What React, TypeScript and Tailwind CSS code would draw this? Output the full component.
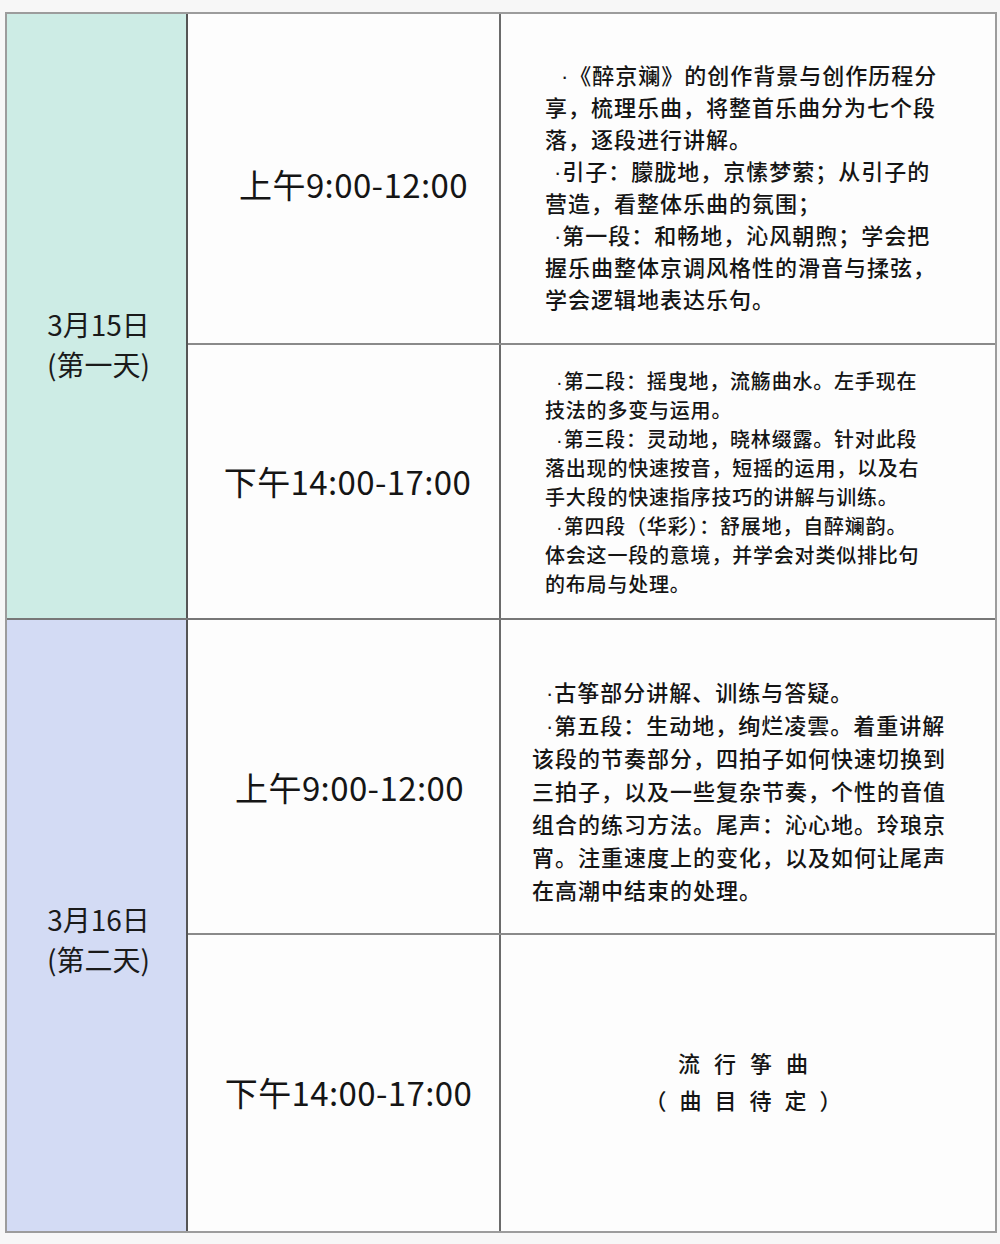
const font = { fontFamily: '"Noto Sans CJK SC", "Noto Sans", sans-serif' };

type Line = { t: string; indent?: number; dot?: boolean };

function Lines({ lines, size, lh, track }: { lines: Line[]; size: string; lh: number; track: string }) {
  return (
    <div className={`${size} ${track} text-[#151515] font-medium`}>
      {lines.map((l, i) => (
        <div
          key={i}
          style={{ paddingLeft: l.indent ?? 0, height: lh, lineHeight: `${lh}px` }}
          className="whitespace-nowrap overflow-visible"
        >
          {l.dot && <span className="inline-block leading-none font-['Liberation_Sans',sans-serif] tracking-[1px]">·</span>}
          {l.t}
        </div>
      ))}
    </div>
  );
}

const row1: Line[] = [
  { t: '《醉京斓》的创作背景与创作历程分', indent: 16, dot: true },
  { t: '享，梳理乐曲，将整首乐曲分为七个段' },
  { t: '落，逐段进行讲解。' },
  { t: '引子：朦胧地，京愫梦萦；从引子的', indent: 9, dot: true },
  { t: '营造，看整体乐曲的氛围；' },
  { t: '第一段：和畅地，沁风朝煦；学会把', indent: 9, dot: true },
  { t: '握乐曲整体京调风格性的滑音与揉弦，' },
  { t: '学会逻辑地表达乐句。' },
];

const row2: Line[] = [
  { t: '第二段：摇曳地，流觞曲水。左手现在', indent: 11, dot: true },
  { t: '技法的多变与运用。' },
  { t: '第三段：灵动地，晓林缀露。针对此段', indent: 11, dot: true },
  { t: '落出现的快速按音，短摇的运用，以及右' },
  { t: '手大段的快速指序技巧的讲解与训练。' },
  { t: '第四段（华彩）：舒展地，自醉斓韵。', indent: 11, dot: true },
  { t: '体会这一段的意境，并学会对类似排比句' },
  { t: '的布局与处理。' },
];

const row3: Line[] = [
  { t: '古筝部分讲解、训练与答疑。', indent: 14, dot: true },
  { t: '第五段：生动地，绚烂凌雲。着重讲解', indent: 14, dot: true },
  { t: '该段的节奏部分，四拍子如何快速切换到' },
  { t: '三拍子，以及一些复杂节奏，个性的音值' },
  { t: '组合的练习方法。尾声：沁心地。玲琅京' },
  { t: '宵。注重速度上的变化，以及如何让尾声' },
  { t: '在高潮中结束的处理。' },
];

function Time({ text, pt }: { text: string; pt: string }) {
  return (
    <div className={`w-[313px] shrink-0 border-r-2 border-[#6b6b6b] flex items-center justify-center ${pt}`}>
      <span className="text-[33px] text-[#151515] tracking-[0.4px]">{text}</span>
    </div>
  );
}

function DateCell({ d, sub, bg, pt }: { d: string; sub: string; bg: string; pt: string }) {
  return (
    <div className={`w-[181px] shrink-0 border-r-2 border-[#555] ${bg} flex flex-col items-center justify-center ${pt}`}>
      <div className="text-[28px] leading-[40px] text-[#1a1a1a] pl-[4px]">{d}</div>
      <div className="text-[28px] leading-[40px] text-[#1a1a1a] pl-[4px]">{sub}</div>
    </div>
  );
}

export default function App() {
  return (
    <div style={font} className="w-[1000px] h-[1244px] bg-[#f7f7f7] pt-[12px] pl-[5px]">
      <div className="w-[992px] border-2 border-[#9c9c9c] bg-[#fdfdfd] flex flex-col">
        <div className="h-[606px] flex">
          <DateCell d="3月15日" sub="(第一天)" bg="bg-[#cdece5]" pt="pt-[54px]" />
          <div className="flex-1 flex flex-col">
            <div className="h-[331px] flex border-b-2 border-[#8a8a8a]">
              <Time text="上午9:00-12:00" pt="pt-[12px] pl-[20px]" />
              <div className="flex-1 pl-[44px] pt-[44px]">
                <Lines lines={row1} size="text-[22px]" lh={32} track="tracking-[1px]" />
              </div>
            </div>
            <div className="flex-1 flex border-b-2 border-[#777]">
              <Time text="下午14:00-17:00" pt="pt-[0px] pl-[8px]" />
              <div className="flex-1 pl-[44px] pt-[21px]">
                <Lines lines={row2} size="text-[20px]" lh={29} track="tracking-[0.8px]" />
              </div>
            </div>
          </div>
        </div>
        <div className="h-[2px] bg-[#777] -mt-[2px] w-[181px]" />
        <div className="h-[611px] flex">
          <DateCell d="3月16日" sub="(第二天)" bg="bg-[#d3dbf4]" pt="pt-[26px]" />
          <div className="flex-1 flex flex-col">
            <div className="h-[315px] flex border-b-2 border-[#8a8a8a]">
              <Time text="上午9:00-12:00" pt="pt-[22px] pl-[12px]" />
              <div className="flex-1 pl-[31px] pt-[55px]">
                <Lines lines={row3} size="text-[22px]" lh={33} track="tracking-[1px]" />
              </div>
            </div>
            <div className="flex-1 flex">
              <Time text="下午14:00-17:00" pt="pt-[20px] pl-[10px]" />
              <div className="flex-1 flex flex-col items-center justify-center pb-[4px] pr-[10px] text-[22px] leading-[37px] text-[#151515] font-medium">
                <div className="tracking-[14px] pl-[14px]">流行筝曲</div>
                <div className="tracking-[13px] pl-[13px]">（曲目待定）</div>
              </div>
            </div>
          </div>
        </div>
      </div>
    </div>
  );
}
